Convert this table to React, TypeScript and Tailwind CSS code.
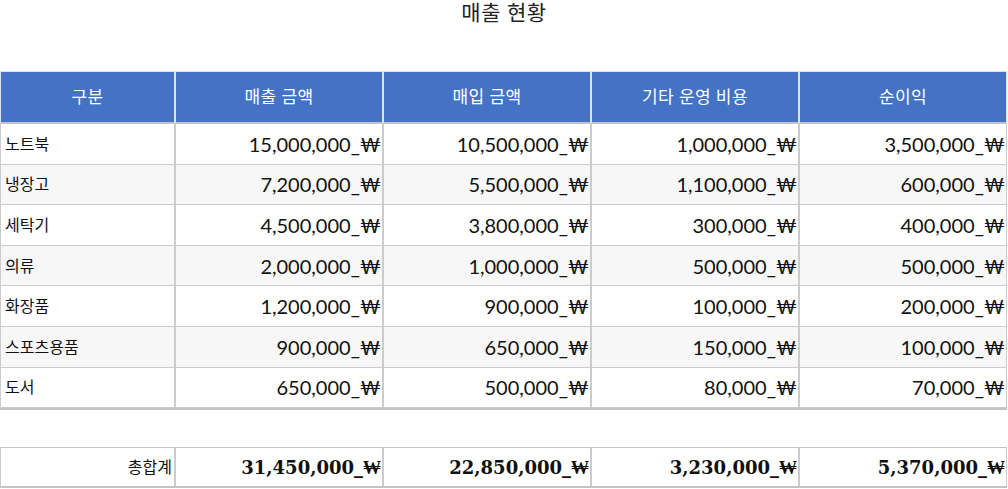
import React from 'react';

const rows = [
  { name: '노트북', sales: '15,000,000', cost: '10,500,000', etc: '1,000,000', profit: '3,500,000' },
  { name: '냉장고', sales: '7,200,000', cost: '5,500,000', etc: '1,100,000', profit: '600,000' },
  { name: '세탁기', sales: '4,500,000', cost: '3,800,000', etc: '300,000', profit: '400,000' },
  { name: '의류', sales: '2,000,000', cost: '1,000,000', etc: '500,000', profit: '500,000' },
  { name: '화장품', sales: '1,200,000', cost: '900,000', etc: '100,000', profit: '200,000' },
  { name: '스포츠용품', sales: '900,000', cost: '650,000', etc: '150,000', profit: '100,000' },
  { name: '도서', sales: '650,000', cost: '500,000', etc: '80,000', profit: '70,000' },
];

const headers = ['구분', '매출 금액', '매입 금액', '기타 운영 비용', '순이익'];

const bodyFont = { fontFamily: 'Lato, "Noto Sans CJK KR", sans-serif' };

function Money({ value }: { value: string }) {
  return <>{value}_₩</>;
}

export default function App() {
  return (
    <div className="w-[1008px] h-[489px] bg-white overflow-hidden" style={bodyFont}>
      {/* Title */}
      <div className="h-[71px] flex justify-center">
        <h1 className="text-[21px] leading-[23px] text-[#222] tracking-wide">매출 현황</h1>
      </div>

      {/* Main table */}
      <table className="w-[1007px] table-fixed border-separate border-spacing-0 border-b-2 border-[#c4c4c4] text-[20px] text-[#111]">
        <colgroup>
          <col className="w-[175px]" />
          <col className="w-[208px]" />
          <col className="w-[208px]" />
          <col className="w-[208px]" />
          <col className="w-[208px]" />
        </colgroup>
        <thead>
          <tr>
            {headers.map((h) => (
              <th
                key={h}
                className="h-[53px] bg-[#4472c4] text-white font-normal text-[17px] text-center border border-[#dde3ee] border-b-2 border-b-[#c4c4c4] tracking-wide"
              >
                {h}
              </th>
            ))}
          </tr>
        </thead>
        <tbody>
          {rows.map((r, i) => (
            <tr key={r.name} className={i % 2 === 1 ? 'bg-[#f7f7f7]' : 'bg-white'}>
              <td className="h-[40.6px] px-[4px] text-left text-[16px] border-x border-b border-[#cccccc]">{r.name}</td>
              <td className="px-[1px] text-right border-x border-b border-[#cccccc]"><Money value={r.sales} /></td>
              <td className="px-[1px] text-right border-x border-b border-[#cccccc]"><Money value={r.cost} /></td>
              <td className="px-[1px] text-right border-x border-b border-[#cccccc]"><Money value={r.etc} /></td>
              <td className="px-[1px] text-right border-x border-b border-[#cccccc]"><Money value={r.profit} /></td>
            </tr>
          ))}
        </tbody>
      </table>

      {/* Totals */}
      <table className="mt-[37px] w-[1007px] table-fixed border-separate border-spacing-0 border-t border-b-2 border-[#c4c4c4] text-[#111]">
        <colgroup>
          <col className="w-[175px]" />
          <col className="w-[208px]" />
          <col className="w-[208px]" />
          <col className="w-[208px]" />
          <col className="w-[208px]" />
        </colgroup>
        <tbody>
          <tr>
            <td className="h-[38px] px-[2px] text-right text-[16px] border-x border-[#cccccc]">총합계</td>
            {['31,450,000', '22,850,000', '3,230,000', '5,370,000'].map((v) => (
              <td
                key={v}
                className="px-[1px] text-right font-bold text-[18px] border-x border-[#cccccc]"
                style={{ fontFamily: '"DejaVu Serif", serif' }}
              >
                <Money value={v} />
              </td>
            ))}
          </tr>
        </tbody>
      </table>
    </div>
  );
}
